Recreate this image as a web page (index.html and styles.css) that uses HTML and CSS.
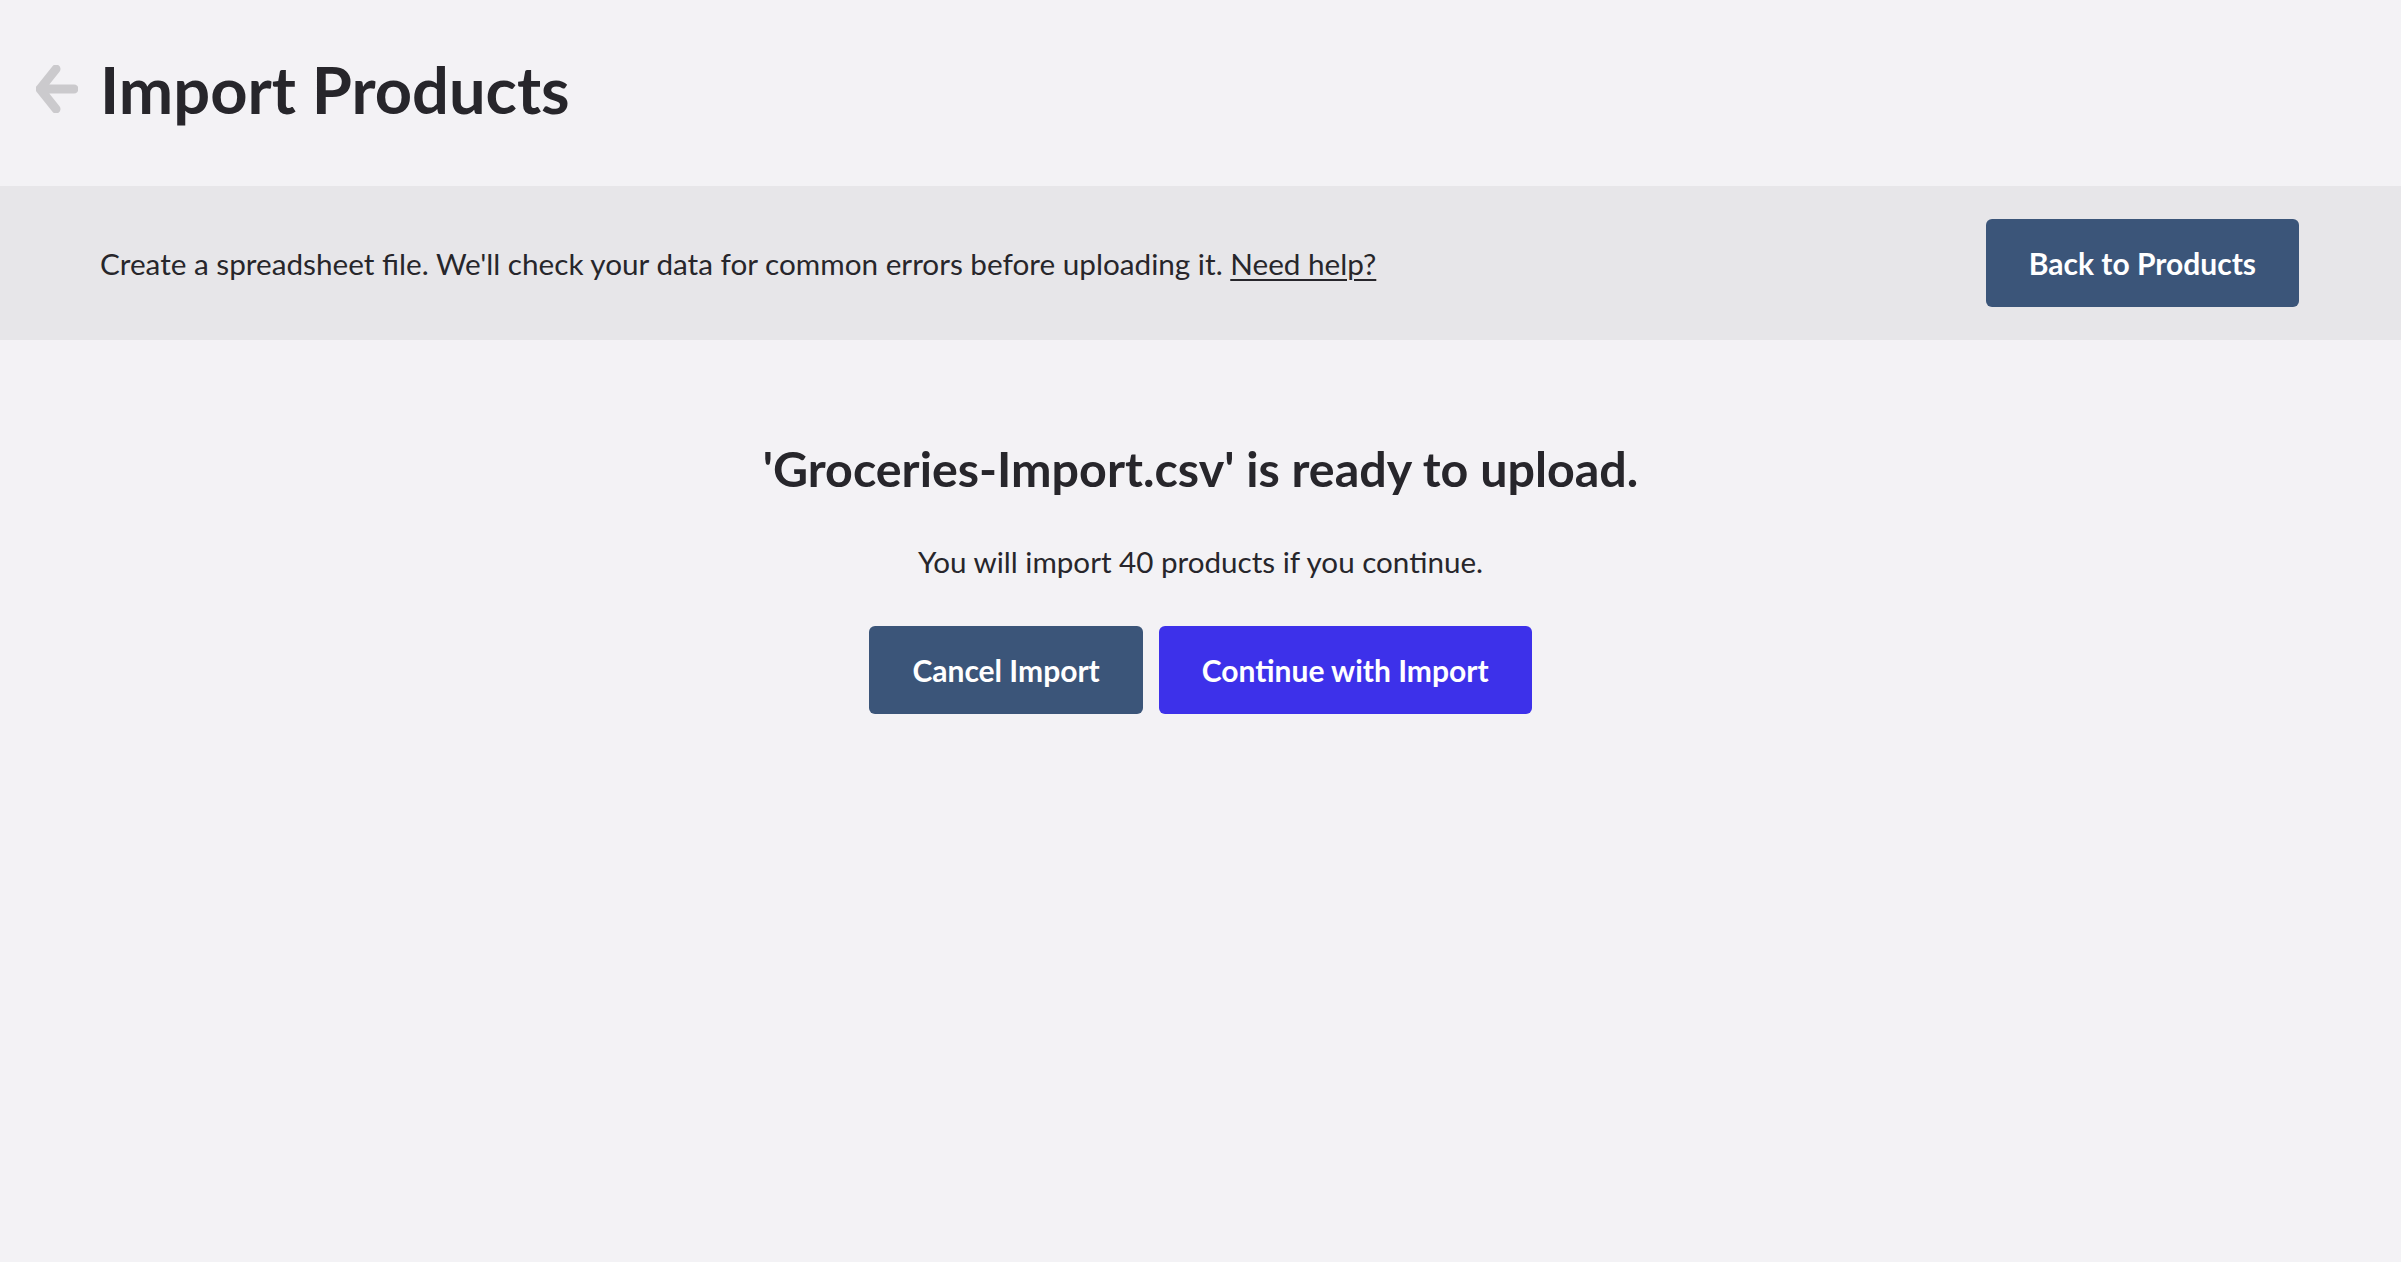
FILE: index.html
```html
<!DOCTYPE html>
<html lang="en">
<head>
<meta charset="utf-8">
<title>Import Products</title>
<link rel="stylesheet" href="styles.css">
</head>
<body>
<header class="page-header">
  <a class="back-link" href="#" aria-label="Back">
    <svg class="back-icon" viewBox="0 0 42 48" width="42" height="48">
      <path d="M20 4 L4 24 L20 44 M4 24 L38 24" fill="none" stroke="#cbcacd" stroke-width="9" stroke-linecap="round" stroke-linejoin="round"/>
    </svg>
  </a>
  <h1 class="page-title">Import Products</h1>
</header>
<section class="banner">
  <p class="banner-text">Create a spreadsheet file. We'll check your data for common errors before uploading it. <a class="help-link" href="#">Need help?</a></p>
  <button class="btn btn-slate">Back to Products</button>
</section>
<main class="content">
  <h2 class="ready-title">'Groceries-Import.csv' is ready to upload.</h2>
  <p class="ready-text">You will import 40 products if you continue.</p>
  <div class="actions">
    <button class="btn btn-slate">Cancel Import</button>
    <button class="btn btn-primary">Continue with Import</button>
  </div>
</main>
</body>
</html>
```
FILE: styles.css
```css
* { box-sizing: border-box; }
html, body { margin: 0; padding: 0; }
body {
  background: #f3f2f5;
  color: #27262b;
  font-family: Lato, "Noto Sans", sans-serif;
  min-height: 1262px;
}
.page-header {
  display: flex;
  align-items: center;
  padding: 50px 100px 58px 36px;
  gap: 22px;
}
.back-link { display: flex; }
.back-icon { display: block; }
.page-title {
  margin: 0;
  font-size: 65px;
  line-height: 78px;
  font-weight: 700;
  color: #27262b;
}
.banner {
  background: #e7e6e9;
  height: 154px;
  padding: 0 102px 0 100px;
  display: flex;
  align-items: center;
  justify-content: space-between;
}
.banner-text {
  margin: 0;
  padding-top: 3px;
  font-size: 29.7px;
  line-height: 1.5;
  color: #27262b;
}
.help-link { color: #27262b; text-decoration: underline; text-underline-offset: 4px; text-decoration-thickness: 2px; }
.btn {
  height: 88px;
  padding: 0 43px;
  border: none;
  border-radius: 6px;
  font-family: Lato, "Noto Sans", sans-serif;
  font-size: 30px;
  font-weight: 700;
  color: #ffffff;
  cursor: pointer;
}
.btn-slate { background: #3b5579; }
.btn-primary { background: #3d31ea; }
.content {
  display: flex;
  flex-direction: column;
  align-items: center;
  padding-top: 99px;
}
.ready-title {
  margin: 0;
  font-size: 48.4px;
  line-height: 1.2;
  font-weight: 700;
}
.ready-text {
  margin: 43px 0 0;
  font-size: 29.6px;
  line-height: 1.5;
}
.actions {
  display: flex;
  gap: 16px;
  margin-top: 42px;
}
```
